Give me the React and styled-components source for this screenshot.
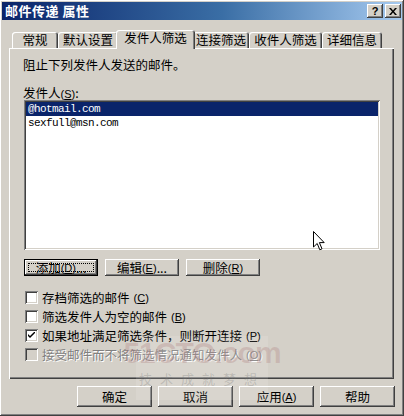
import React from "react";
import styled, { createGlobalStyle, css } from "styled-components";

const Global = createGlobalStyle`
  html, body { margin: 0; padding: 0; background: #d4d0c8; }
  body { font-family: "Liberation Sans", "Noto Sans CJK SC", sans-serif; }
  * { box-sizing: border-box; }
`;

const raised = css`
  box-shadow: inset -1px -1px #404040, inset 1px 1px #ffffff,
    inset -2px -2px #808080, inset 2px 2px #d4d0c8;
`;

const Window = styled.div`
  position: relative;
  width: 404px;
  height: 416px;
  padding: 2px;
  background: #d4d0c8;
  display: flex;
  flex-direction: column;
  ${raised};
  font-size: 12.5px;
  color: #000;
  overflow: hidden;
`;

const TitleBar = styled.div`
  height: 18px;
  display: flex;
  align-items: center;
  padding: 0 1px 0 3px;
  background: linear-gradient(to right, #0a246a 0%, #3a6ea5 55%, #a6caf0 100%);
`;

const Title = styled.div`
  flex: 1;
  color: #fff;
  font-weight: bold;
  font-size: 13px;
  line-height: 16px;
  letter-spacing: 0.5px;
  font-family: "Noto Sans CJK SC", sans-serif;
`;

const CaptionButton = styled.div`
  width: 16px;
  height: 14px;
  margin-left: ${(p) => (p.$gap ? "2px" : "0")};
  background: #d4d0c8;
  ${raised};
  display: flex;
  align-items: center;
  justify-content: center;
  font-weight: bold;
  font-size: 11px;
  line-height: 12px;
  font-family: "Liberation Sans", sans-serif;
`;

const Body = styled.div`
  flex: 1;
  display: flex;
  flex-direction: column;
  padding: 10px 8px 0 7px;
`;

const TabRow = styled.div`
  display: flex;
  align-items: flex-end;
  height: 18px;
  padding-left: 3px;
  position: relative;
  z-index: 1;
`;

const Tab = styled.div`
  width: ${(p) => p.$w}px;
  height: ${(p) => (p.$active ? 19 : 16)}px;
  margin: ${(p) => (p.$active ? "0 -2px -1px -2px" : "0")};
  padding-top: ${(p) => (p.$active ? 1 : 1)}px;
  background: #d4d0c8;
  border-radius: 3px 3px 0 0;
  box-shadow: inset 1px 1px #ffffff, inset -1px 0 #404040, inset -2px 0 #808080;
  text-align: center;
  line-height: 14px;
  font-size: 12.5px;
  font-family: "Noto Sans CJK SC", sans-serif;
  white-space: nowrap;
  position: relative;
  z-index: ${(p) => (p.$active ? 2 : 1)};
`;

const Panel = styled.div`
  height: 331px;
  padding: 10px 10px 0 14px;
  display: flex;
  flex-direction: column;
  box-shadow: inset 1px 1px #ffffff, inset -1px -1px #404040,
    inset -2px -2px #808080;
`;

const Line = styled.div`
  line-height: 14px;
  height: 14px;
  margin-top: ${(p) => p.$mt || 0}px;
  font-family: "Noto Sans CJK SC", sans-serif;
  white-space: nowrap;
`;

const Key = styled.span`
  font-family: "Liberation Sans", sans-serif;
  font-size: 11px;
`;

const ListBox = styled.div`
  margin: 0 0 0 1px;
  width: 356px;
  height: 150px;
  background: #fff;
  padding: 2px;
  box-shadow: inset 1px 1px #808080, inset -1px -1px #ffffff,
    inset 2px 2px #404040, inset -2px -2px #d4d0c8;
`;

const ListItem = styled.div`
  height: 14px;
  line-height: 14px;
  padding-left: 2px;
  font-family: "Liberation Mono", monospace;
  font-size: 11px;
  letter-spacing: -0.6px;
  background: ${(p) => (p.$sel ? "#0a246a" : "transparent")};
  color: ${(p) => (p.$sel ? "#fff" : "#000")};
`;

const ButtonRow = styled.div`
  display: flex;
  gap: 7px;
  margin-top: 9px;
  margin-left: 1px;
`;

const Button = styled.div`
  position: relative;
  width: ${(p) => p.$w || 74}px;
  height: ${(p) => p.$h || 17}px;
  background: #d4d0c8;
  ${raised};
  display: flex;
  align-items: center;
  justify-content: center;
  font-family: "Noto Sans CJK SC", sans-serif;
  font-size: 12.5px;
  line-height: 14px;
  white-space: nowrap;
  ${(p) =>
    p.$default &&
    css`
      box-shadow: inset 0 0 0 1px #000, inset -2px -2px #404040,
        inset 2px 2px #ffffff, inset -3px -3px #808080;
      &::after {
        content: "";
        position: absolute;
        inset: 4px;
        border: 1px dotted #000;
      }
    `}
`;

const Checks = styled.div`
  display: flex;
  flex-direction: column;
  margin-top: 12px;
  margin-left: 2px;
`;

const CheckRow = styled.div`
  height: 19px;
  display: flex;
  align-items: center;
  gap: 4px;
  font-family: "Noto Sans CJK SC", sans-serif;
  color: ${(p) => (p.$disabled ? "#808080" : "#000")};
  text-shadow: ${(p) => (p.$disabled ? "1px 1px #ffffff" : "none")};
  white-space: nowrap;
`;

const Box = styled.div`
  width: 13px;
  height: 13px;
  flex: none;
  background: ${(p) => (p.$disabled ? "#d4d0c8" : "#fff")};
  box-shadow: inset 1px 1px #808080, inset -1px -1px #ffffff,
    inset 2px 2px #404040, inset -2px -2px #d4d0c8;
  display: flex;
  align-items: center;
  justify-content: center;
`;

const BottomRow = styled.div`
  display: flex;
  justify-content: flex-end;
  gap: 6px;
  margin-top: 7px;
  margin-right: -1px;
`;

const Watermark = styled.div`
  position: absolute;
  left: 136px;
  top: 336px;
  width: 132px;
  height: 64px;
  background: rgba(255, 255, 255, 0.12);
  display: flex;
  flex-direction: column;
  align-items: center;
  pointer-events: none;
`;

const WmBig = styled.div`
  font-family: "Liberation Sans", sans-serif;
  font-weight: bold;
  font-size: 30px;
  line-height: 34px;
  color: rgba(170, 120, 120, 0.28);
  letter-spacing: -1px;
`;

const WmSmall = styled.div`
  font-family: "Noto Sans CJK SC", sans-serif;
  font-size: 13px;
  line-height: 18px;
  letter-spacing: 8px;
  color: rgba(120, 120, 120, 0.3);
`;

const Cursor = styled.svg`
  position: absolute;
  left: 313px;
  top: 231px;
`;

const Check = () => (
  <svg width="7" height="7" viewBox="0 0 7 7">
    <path d="M0 2 L0 4 L2 6 L7 1 L7 -1 L2 4 Z" fill="#000" />
  </svg>
);

const U = ({ c }) => (
  <Key>
    (<u>{c}</u>)
  </Key>
);

export default function App() {
  const tabs = [
    ["常规", 46],
    ["默认设置", 60],
    ["发件人筛选", 79, true],
    ["连接筛选", 56],
    ["收件人筛选", 73],
    ["详细信息", 60],
  ];
  return (
    <>
      <Global />
      <Window>
        <TitleBar>
          <Title>邮件传递 属性</Title>
          <CaptionButton>?</CaptionButton>
          <CaptionButton $gap>
            <svg width="8" height="7" viewBox="0 0 8 7">
              <path d="M0 0h2l2 2.5L6 0h2L5 3.5 8 7H6L4 4.5 2 7H0l3-3.5z" fill="#000" />
            </svg>
          </CaptionButton>
        </TitleBar>
        <Body>
          <TabRow>
            {tabs.map(([t, w, a]) => (
              <Tab key={t} $w={w} $active={a}>
                {t}
              </Tab>
            ))}
          </TabRow>
          <Panel>
            <Line>阻止下列发件人发送的邮件。</Line>
            <Line $mt={14}>
              发件人<U c="S" />:
            </Line>
            <ListBox>
              <ListItem $sel>@hotmail.com</ListItem>
              <ListItem>sexfull@msn.com</ListItem>
            </ListBox>
            <ButtonRow>
              <Button $default>
                添加<U c="D" />...
              </Button>
              <Button>
                编辑 <U c="E" />...
              </Button>
              <Button>
                删除 <U c="R" />
              </Button>
            </ButtonRow>
            <Checks>
              <CheckRow>
                <Box />
                存档筛选的邮件 <U c="C" />
              </CheckRow>
              <CheckRow>
                <Box />
                筛选发件人为空的邮件 <U c="B" />
              </CheckRow>
              <CheckRow>
                <Box>
                  <Check />
                </Box>
                如果地址满足筛选条件，则断开连接 <U c="P" />
              </CheckRow>
              <CheckRow $disabled>
                <Box $disabled />
                接受邮件而不将筛选情况通知发件人 <U c="O" />
              </CheckRow>
            </Checks>
          </Panel>
          <BottomRow>
            <Button $w={75} $h={21}>确定</Button>
            <Button $w={75} $h={21}>取消</Button>
            <Button $w={75} $h={21}>
              应用<U c="A" />
            </Button>
            <Button $w={75} $h={21}>帮助</Button>
          </BottomRow>
        </Body>
        <Watermark>
          <WmBig>51CTO.com</WmBig>
          <WmSmall>技术成就梦想</WmSmall>
        </Watermark>
        <Cursor width="12" height="20" viewBox="0 0 12 20">
          <path
            d="M0.5 0.5 L0.5 16 L4.2 12.5 L6.8 18.8 L9 17.8 L6.4 11.6 L11.2 11.6 Z"
            fill="#fff"
            stroke="#000"
            strokeWidth="1"
          />
        </Cursor>
      </Window>
    </>
  );
}
